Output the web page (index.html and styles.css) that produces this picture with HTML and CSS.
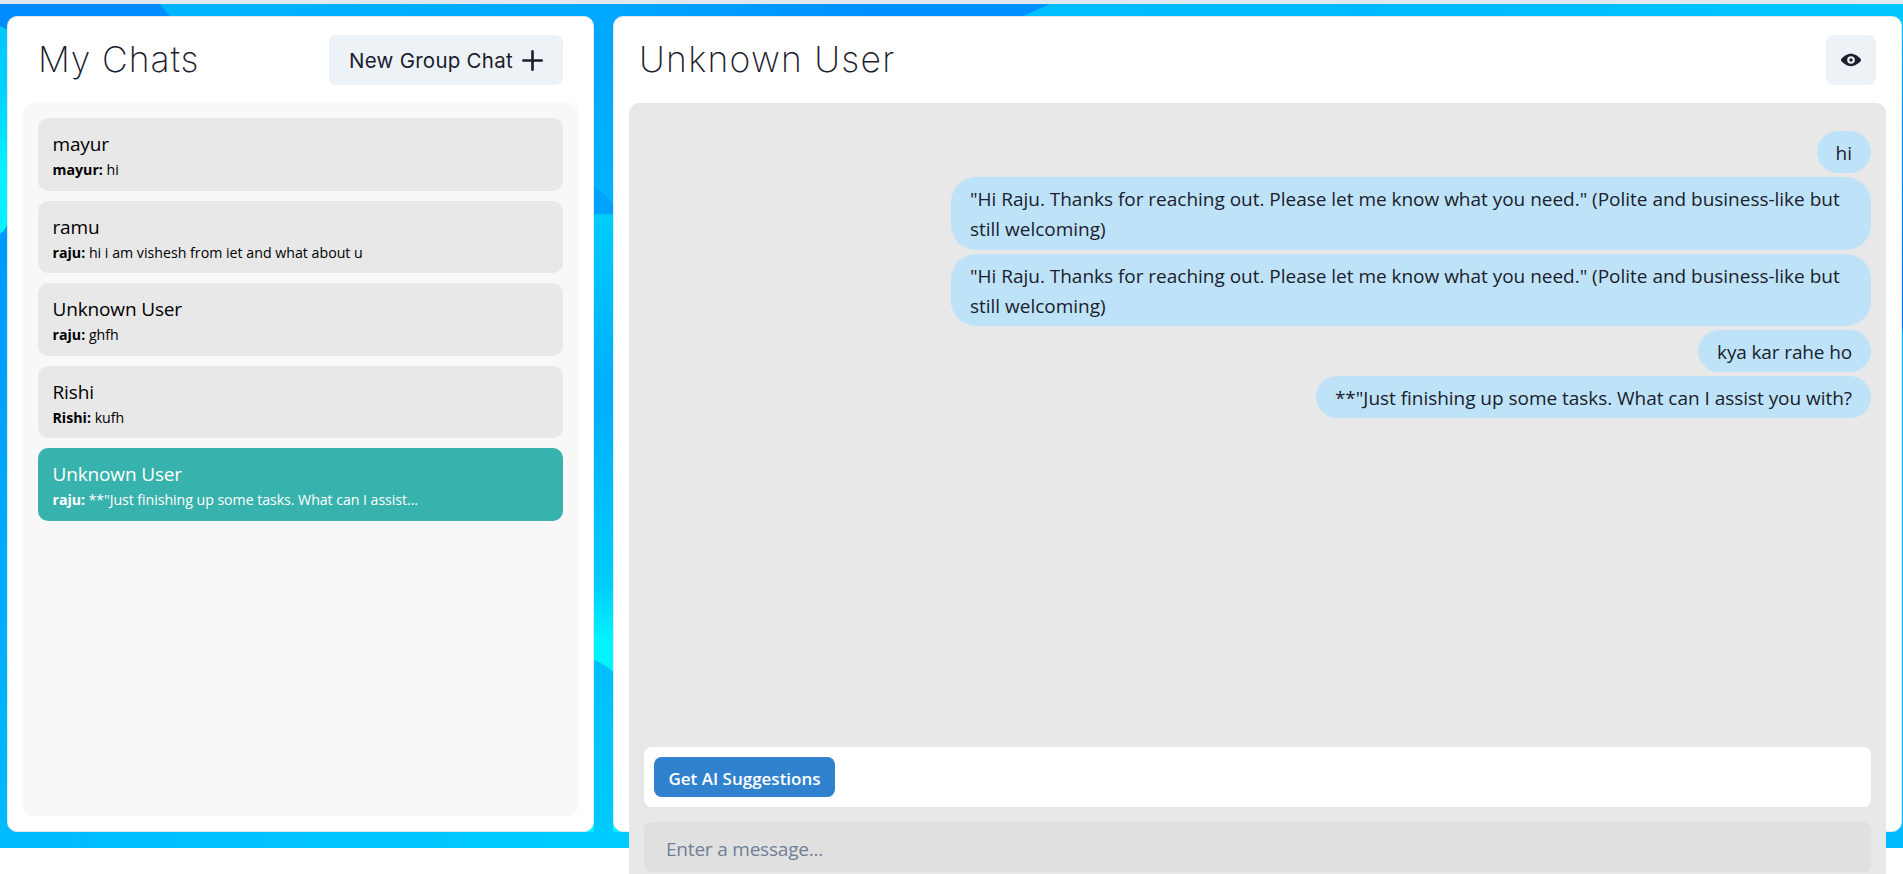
FILE: index.html
```html
<!DOCTYPE html>
<html lang="en">
<head>
<meta charset="utf-8">
<title>Chats</title>
<link rel="stylesheet" href="styles.css">
</head>
<body>
<div class="app">
  <div class="backdrop">
    <svg class="scene" viewBox="0 0 1903 844" preserveAspectRatio="none" aria-hidden="true">
      <defs>
        <linearGradient id="top" x1="0" y1="0" x2="1" y2="0">
          <stop offset="0" stop-color="#00b4ff"/><stop offset=".1" stop-color="#00b4ff"/>
          <stop offset=".3" stop-color="#00aaff"/>
          <stop offset=".46" stop-color="#0090ff"/><stop offset=".56" stop-color="#0090ff"/>
        </linearGradient>
        <linearGradient id="topRight" x1="0" y1="0" x2="1" y2="0">
          <stop offset="0" stop-color="#00bfff"/><stop offset=".4" stop-color="#00b8ff"/>
          <stop offset="1" stop-color="#00c8ff"/>
        </linearGradient>
        <linearGradient id="left" x1="0" y1="0" x2="0" y2="1">
          <stop offset="0" stop-color="#00c8ff"/><stop offset=".3" stop-color="#00d0ff"/>
          <stop offset=".65" stop-color="#00f0ff"/><stop offset="1" stop-color="#00f4ff"/>
        </linearGradient>
        <linearGradient id="leftLow" x1="0" y1="0" x2="0" y2="1">
          <stop offset="0" stop-color="#0098ff"/><stop offset="1" stop-color="#00bbff"/>
        </linearGradient>
        <linearGradient id="mid" x1="0" y1="0" x2="0" y2="1">
          <stop offset="0" stop-color="#00a6ff"/><stop offset=".252" stop-color="#00b4ff"/>
          <stop offset=".256" stop-color="#00ccff"/><stop offset=".47" stop-color="#00aeff"/>
          <stop offset=".7" stop-color="#00ccff"/><stop offset=".77" stop-color="#00f4ff"/>
          <stop offset=".8" stop-color="#00f4ff"/>
        </linearGradient>
        <linearGradient id="midLow" x1="0" y1="0" x2="0" y2="1">
          <stop offset="0" stop-color="#00bfff"/><stop offset="1" stop-color="#00ccff"/>
        </linearGradient>
        <linearGradient id="right" x1="0" y1="0" x2="0" y2="1">
          <stop offset="0" stop-color="#00c8ff"/><stop offset=".15" stop-color="#0090ff"/>
          <stop offset=".39" stop-color="#0078ff"/><stop offset=".398" stop-color="#00bbff"/>
          <stop offset="1" stop-color="#00bbff"/>
        </linearGradient>
        <linearGradient id="base" x1="0" y1="0" x2="1" y2="0">
          <stop offset="0" stop-color="#00baff"/><stop offset=".3" stop-color="#00ccff"/>
          <stop offset="1" stop-color="#00bbff"/>
        </linearGradient>
      </defs>
      <rect width="1903" height="844" fill="url(#base)"/>
      <rect x="580" width="50" height="828" fill="url(#mid)"/>
      <rect x="1890" width="13" height="828" fill="url(#right)"/>
      <rect width="1903" height="20" fill="url(#top)"/>
      <path d="M0 0H160L176 20H14V30L0 22Z" fill="#008cff"/>
      <path d="M1050 0H1903V20H1005Z" fill="url(#topRight)"/>
      <path d="M0 22L14 28V220L8 228L0 232Z" fill="url(#left)"/>
      <path d="M0 230Q5 226 8 220V844H0Z" fill="url(#leftLow)"/>
      <path d="M594 182Q605 190 613 201V210H594Z" fill="#00a2ff"/>
      <path d="M594 656Q605 660 613 668V844H594Z" fill="url(#midLow)"/>
    </svg>
    <section class="panel list-panel">
      <header class="panel-head list-head">
        <h1 class="title title-list">My Chats</h1>
        <button class="soft-btn new-btn"><span class="new-label">New Group Chat</span>
          <svg class="plus" viewBox="0 0 24 24"><path fill="currentColor" d="M0 12a1.500 1.500 0 0 0 1.500 1.500h8.750a.25.25 0 0 1 .25.25v8.750a1.500 1.500 0 0 0 3 0v-8.750a.25.25 0 0 1 .25-.25h8.750a1.500 1.500 0 0 0 0-3h-8.750a.25.25 0 0 1-.25-.25V1.500a1.500 1.500 0 0 0-3 0v8.750a.25.25 0 0 1-.25.25H1.500A1.500 1.500 0 0 0 0 12Z"/></svg>
        </button>
      </header>
      <div class="chat-list">
        <div class="chat"><p class="chat-name">mayur</p><p class="chat-last"><b>mayur:</b> hi</p></div>
        <div class="chat"><p class="chat-name">ramu</p><p class="chat-last"><b>raju:</b> hi i am vishesh from iet and what about u</p></div>
        <div class="chat"><p class="chat-name">Unknown User</p><p class="chat-last"><b>raju:</b> ghfh</p></div>
        <div class="chat"><p class="chat-name">Rishi</p><p class="chat-last"><b>Rishi:</b> kufh</p></div>
        <div class="chat active"><p class="chat-name">Unknown User</p><p class="chat-last"><b>raju:</b> **"Just finishing up some tasks. What can I assist...</p></div>
      </div>
    </section>
    <section class="panel talk-panel">
      <header class="panel-head talk-head">
        <h1 class="title title-talk">Unknown User</h1>
        <button class="soft-btn eye-btn" aria-label="View profile">
          <svg class="eye" viewBox="0 0 24 24"><path fill="currentColor" d="M23.432 10.524C20.787 7.614 16.400 4.538 12 4.600 7.600 4.537 3.213 7.615.568 10.524a2.211 2.211 0 0 0 0 2.948C3.182 16.351 7.507 19.400 11.839 19.400h.308c4.347 0 8.671-3.049 11.288-5.929a2.207 2.207 0 0 0-.003-2.947ZM7.400 12a4.600 4.600 0 1 1 9.200 0 4.600 4.600 0 0 1-9.200 0Z"/><circle cx="12" cy="12" r="2" fill="currentColor"/></svg>
        </button>
      </header>
      <div class="talk">
        <div class="messages">
          <span class="msg">hi</span>
          <span class="msg wide">"Hi Raju. Thanks for reaching out. Please let me know what you need." (Polite and business-like but<br>still welcoming)</span>
          <span class="msg wide">"Hi Raju. Thanks for reaching out. Please let me know what you need." (Polite and business-like but<br>still welcoming)</span>
          <span class="msg kya">kya kar rahe ho</span>
          <span class="msg just">**"Just finishing up some tasks. What can I assist you with?</span>
        </div>
        <div class="suggest"><button class="ai-btn">Get AI Suggestions</button></div>
        <input class="entry" type="text" placeholder="Enter a message...">
      </div>
    </section>
  </div>
</div>
</body>
</html>
```
FILE: styles.css
```css
* { box-sizing: border-box; }
body { margin: 0; background: #fff; color: #1a202c; font-family: "Open Sans", "Noto Sans", sans-serif; overflow: hidden; }
h1, p { margin: 0; font-weight: 400; }
button { border: 0; font-family: inherit; color: inherit; }
.app { height: 874px; border-top: 4px solid #e2e8f0; overflow: hidden; }
.backdrop { position: relative; height: 844px; padding: 12px 1px 16px 7px; display: flex; gap: 19px; }
.scene { position: absolute; inset: 0; width: 100%; height: 100%; }
.panel { position: relative; height: 816px; background: #fff; border: 1px solid #e2e8f0; border-radius: 10px; padding: 18px 15px 15px; display: flex; flex-direction: column; }
.list-panel { width: 587px; }
.talk-panel { width: 1289px; }
.panel-head { height: 50px; margin-bottom: 18px; display: flex; align-items: center; justify-content: space-between; flex: none; }
.list-head { padding: 0 15px; }
.talk-head { padding: 0 10px; }
.title { font-family: Inter, sans-serif; font-weight: 200; font-size: 35.500px; line-height: 50px; white-space: nowrap; }
.title-list { letter-spacing: .9px; }
.title-talk { letter-spacing: 1.250px; }
.soft-btn { background: #edf2f7; border-radius: 7.500px; height: 50px; display: flex; align-items: center; justify-content: center; }
.new-btn { width: 234px; padding: 0; gap: 9px; }
.new-label { font-family: Inter, sans-serif; font-size: 20.500px; font-weight: 400; letter-spacing: .25px; white-space: nowrap; }
.plus { width: 21px; height: 21px; }
.eye-btn { width: 50px; padding: 0; }
.eye { width: 20px; height: 20px; }
.chat-list { height: 713px; background: #f8f8f8; border-radius: 10px; padding: 15px; display: flex; flex-direction: column; gap: 10px; }
.chat { height: 72.500px; border-radius: 10px; background: #e8e8e8; color: #000; padding: 11px 14.500px; flex: none; white-space: nowrap; }
.chat.active { background: #38b2ac; color: #fff; }
.chat-name { font-size: 19px; line-height: 30px; letter-spacing: -.15px; }
.chat-last { font-size: 14.200px; line-height: 22px; }
.active .chat-last { letter-spacing: -.06px; }
.talk { height: 790px; background: #e8e8e8; border-radius: 10px; padding: 28px 15px 15px; display: flex; flex-direction: column; flex: none; }
.messages { height: 616px; display: flex; flex-direction: column; align-items: flex-end; gap: 4px; }
.msg { background: #bee3f8; border-radius: 25px; padding: 7px 19px 5px; font-size: 19px; line-height: 30px; white-space: nowrap; }
.wide { width: 920px; height: 72.500px; letter-spacing: -.02px; }
.kya { letter-spacing: -.13px; }
.just { letter-spacing: -.035px; }
.suggest { height: 60px; background: #fff; border-radius: 7.500px; padding: 10px; margin-bottom: 15px; flex: none; }
.ai-btn { width: 181px; height: 40px; border-radius: 7.500px; background: #3182ce; color: #fff; font-size: 17px; font-weight: 600; padding: 2px 0 0; white-space: nowrap; }
.entry { height: 50px; border: 0; border-radius: 7.500px; background: #e0e0e0; padding: 3px 22px 0; font: 19px "Open Sans", "Noto Sans", sans-serif; letter-spacing: -.2px; flex: none; width: 100%; }
.entry::placeholder { color: #718096; opacity: 1; }
```
